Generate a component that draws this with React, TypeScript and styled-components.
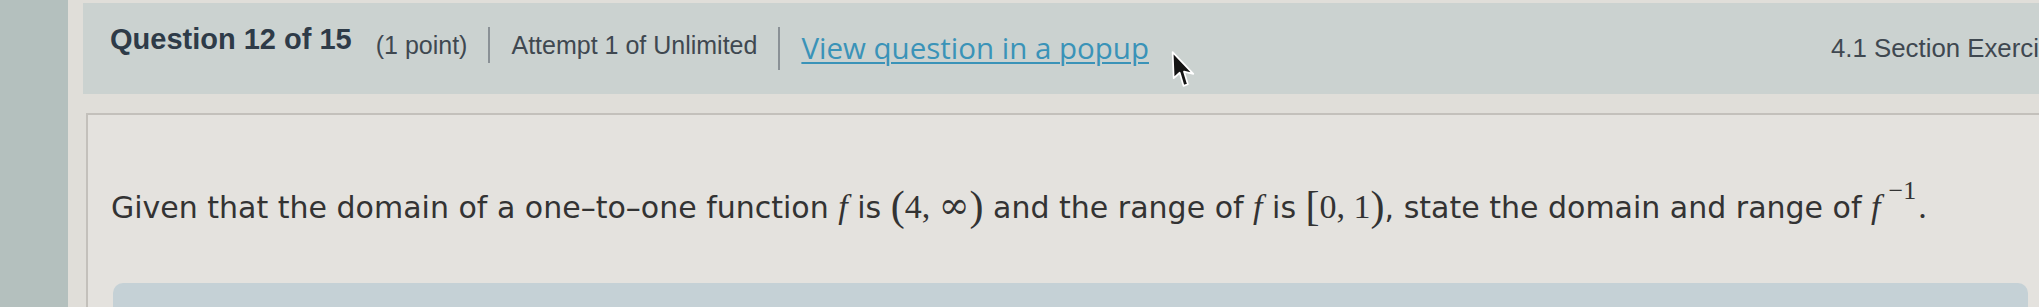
import React from "react";
import styled, { createGlobalStyle } from "styled-components";

const GlobalStyle = createGlobalStyle`
  html, body { margin: 0; padding: 0; }
  body { width: 2039px; height: 307px; overflow: hidden; background: #e0ded9; }
  #root { height: 100%; }
`;

const Page = styled.div`
  display: flex;
  width: 2039px;
  height: 307px;
  overflow: hidden;
  background: #e0ded9;
`;

const Sidebar = styled.aside`
  flex: 0 0 68px;
  background: #b4c0be;
`;

const Main = styled.main`
  flex: 1;
  min-width: 0;
  display: flex;
  flex-direction: column;
  padding: 3px 0 0 15px;
`;

const Header = styled.header`
  position: relative;
  flex: 0 0 91px;
  display: flex;
  align-items: flex-start;
  gap: 21px;
  padding-left: 27px;
  background: #cbd2d0;
  font-family: "Liberation Sans", Arial, sans-serif;
  white-space: nowrap;
  overflow: hidden;
`;

const Title = styled.h1`
  margin: 21.5px 0 0;
  font-size: 29px;
  line-height: 1;
  font-weight: 700;
  color: #2e3b48;
`;

const Meta = styled.span<{ $top: number; $lead?: number }>`
  margin-top: ${(p) => p.$top}px;
  margin-left: ${(p) => p.$lead ?? 0}px;
  font-size: 25px;
  line-height: 1;
  color: #3f4850;
`;

const Divider = styled.span<{ $h: number }>`
  flex: 0 0 2px;
  margin-top: 24px;
  height: ${(p) => p.$h}px;
  background: #8a9196;
`;

const PopupLink = styled.a`
  margin-top: 30px;
  font-family: "Open Sans", "Liberation Sans", sans-serif;
  font-size: 29.5px;
  line-height: 1;
  color: #3a93b8;
  text-decoration: underline;
  text-underline-offset: 3px;
  text-decoration-thickness: 2px;
  cursor: pointer;
`;

const Section = styled.span`
  flex: 0 0 208px;
  margin-left: auto;
  margin-top: 33px;
  overflow: hidden;
  font-size: 25.8px;
  line-height: 1;
  color: #3f4850;
`;

const Cursor = styled.svg`
  position: absolute;
  left: 1088px;
  top: 48px;
`;

const ContentBox = styled.section`
  flex: 1;
  display: flex;
  flex-direction: column;
  margin: 19px -30px 0 3px;
  padding: 69px 39px 0 23px;
  border: 2px solid #c3c0bb;
  background: #e4e2de;
`;

const Prompt = styled.p`
  margin: 0;
  font-family: "DejaVu Sans", Verdana, sans-serif;
  font-size: 30px;
  line-height: 48px;
  color: #333333;
  white-space: nowrap;
`;

const MathVar = styled.i`
  font-family: "Liberation Serif", "Times New Roman", serif;
  font-size: 34px;
  font-style: italic;
  line-height: 0;
`;

const MathNum = styled.span`
  font-family: "Liberation Serif", "Times New Roman", serif;
  font-size: 34px;
  line-height: 0;
`;

const Infinity = styled.span`
  font-family: "DejaVu Serif", "Liberation Serif", serif;
  font-size: 37px;
  line-height: 0;
`;

const Fence = styled.span`
  font-family: "Liberation Serif", "Times New Roman", serif;
  font-size: 42px;
  line-height: 0;
  vertical-align: -2px;
`;

const Sup = styled.span`
  font-family: "Liberation Serif", "Times New Roman", serif;
  font-size: 26px;
  line-height: 0;
  vertical-align: 19px;
  margin-left: 8px;
  margin-right: 2px;
`;

const AnswerArea = styled.div`
  flex: 0 0 60px;
  margin: 51px 0 0 2px;
  background: #c5d1d6;
  border-radius: 10px 10px 0 0;
`;

export default function App() {
  return (
    <>
      <GlobalStyle />
      <Page>
        <Sidebar />
        <Main>
          <Header>
            <Title>Question 12 of 15</Title>
            <Meta $top={30} $lead={3}>(1 point)</Meta>
            <Divider $h={36} />
            <Meta $top={30}>Attempt 1 of Unlimited</Meta>
            <Divider $h={43} />
            <PopupLink>View question in a popup</PopupLink>
            <Section>4.1 Section Exercises</Section>
            <Cursor width="25" height="37" viewBox="0 0 22 34">
              <path
                d="M1 1 L2 25 L7.5 20 L11 32 L15 30.5 L11.5 19 L20 21 Z"
                fill="#141414"
                stroke="#ffffff"
                strokeWidth="1.6"
                strokeLinejoin="round"
              />
            </Cursor>
          </Header>
          <ContentBox>
            <Prompt>
              Given that the domain of a one–to–one function <MathVar>f</MathVar> is{" "}
              <Fence>(</Fence>
              <MathNum>4, </MathNum>
              <Infinity>∞</Infinity>
              <Fence>)</Fence> and the range of <MathVar>f</MathVar> is{" "}
              <Fence>[</Fence>
              <MathNum>0, 1</MathNum>
              <Fence>)</Fence>, state the domain and range of <MathVar>f</MathVar>
              <Sup>−1</Sup>
              <MathNum>.</MathNum>
            </Prompt>
            <AnswerArea />
          </ContentBox>
        </Main>
      </Page>
    </>
  );
}
